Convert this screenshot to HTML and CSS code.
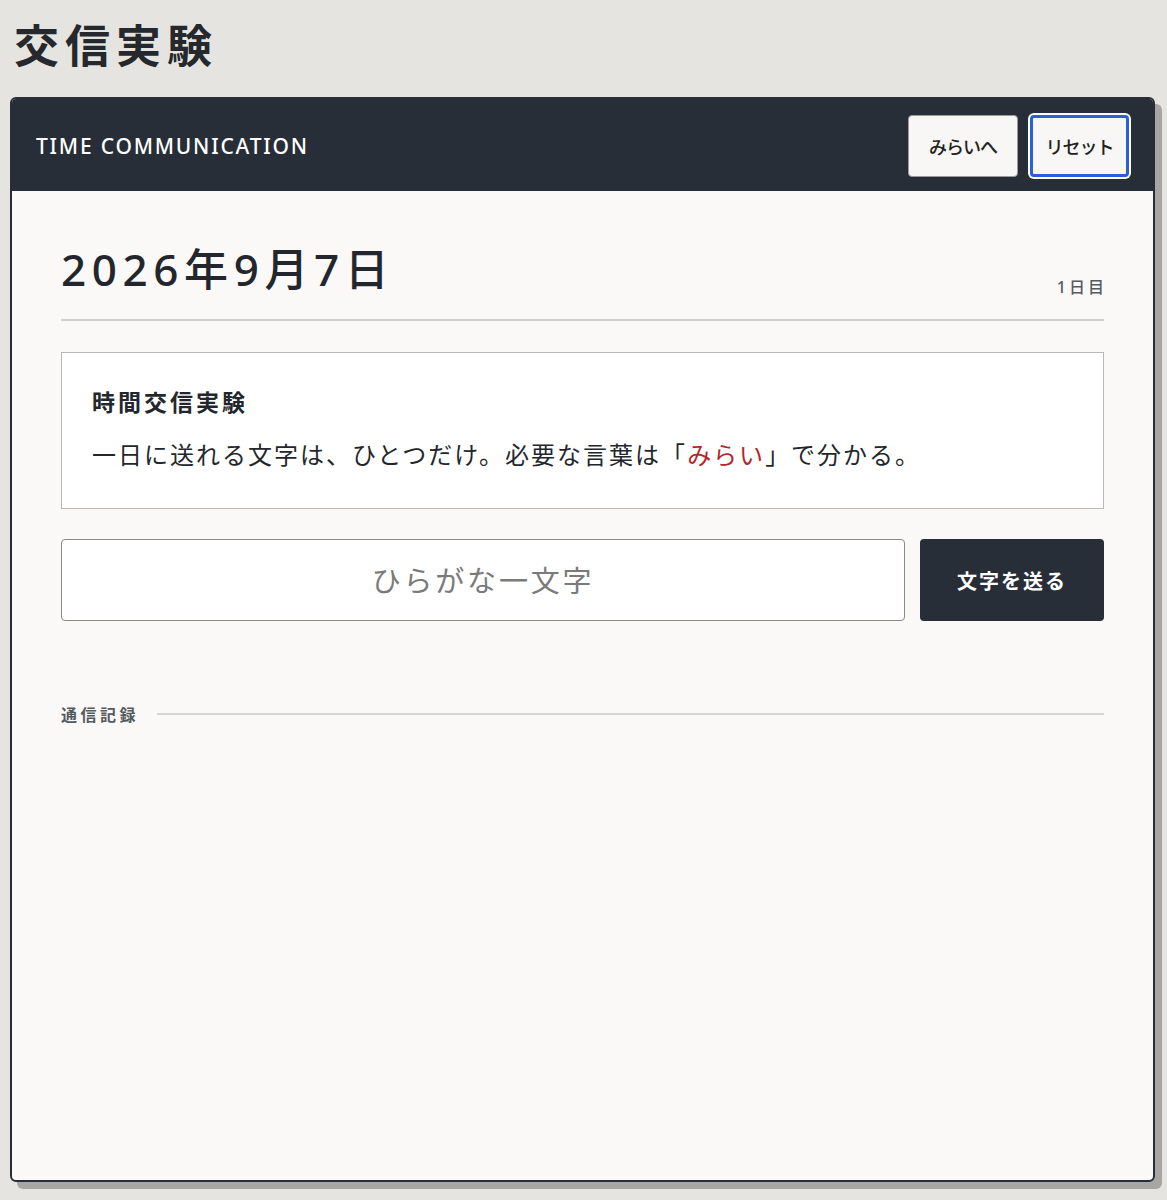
FILE: index.html
```html
<!DOCTYPE html>
<html lang="ja">
<head>
    <meta charset="UTF-8">
    <meta name="viewport" content="width=device-width, initial-scale=1.0">
    <title>交信実験</title>
    <link rel="stylesheet" href="styles.css">
</head>
<body>
    <h1 class="page-title">交信実験</h1>

    <div class="panel">
        <div class="panel-header">
            <span class="panel-title">TIME COMMUNICATION</span>
            <div class="header-actions">
                <button class="header-button future">みらいへ</button>
                <button class="header-button reset focused">リセット</button>
            </div>
        </div>

        <div class="panel-body">
            <div class="date-row">
                <span class="date-text">2026年9月7日</span>
                <span class="day-count">1日目</span>
            </div>

            <div class="info-box">
                <div class="info-title">時間交信実験</div>
                <p class="info-text">一日に送れる文字は、ひとつだけ。必要な言葉は「<span class="keyword">みらい</span>」で分かる。</p>
            </div>

            <div class="send-row">
                <input type="text" class="char-input" placeholder="ひらがな一文字" maxlength="1">
                <button class="send-button">文字を送る</button>
            </div>

            <div class="log-heading">
                <span>通信記録</span>
                <div class="log-line"></div>
            </div>
            <div class="log-list"></div>
        </div>
    </div>
</body>
</html>
```

FILE: styles.css
```css
:root {
    --dark: #272e38;
    --page-bg: #e6e4e0;
    --card-bg: #faf9f8;
    --muted: #555a60;
    --accent-red: #b3262a;
}

* {
    box-sizing: border-box;
    margin: 0;
    padding: 0;
    font-family: 'Noto Sans', 'Noto Sans CJK JP', sans-serif;
}

body {
    background-color: var(--page-bg);
    padding: 20px 12px 10px 10px;
    color: #23272d;
}

.page-title {
    font-size: 45px;
    line-height: 52px;
    font-weight: 700;
    letter-spacing: 6px;
    padding-left: 4px;
    color: #25282c;
    margin-bottom: 25px;
}

.panel {
    min-height: 1085px;
    background-color: var(--card-bg);
    border: 2px solid var(--dark);
    border-radius: 6px;
    box-shadow: 7px 7px 0 #a8a6a2;
    overflow: hidden;
    display: flex;
    flex-direction: column;
}

.panel-header {
    background-color: var(--dark);
    display: flex;
    justify-content: space-between;
    align-items: center;
    padding: 16px 24px 14px 24px;
}

.panel-title {
    color: #fff;
    font-size: 21px;
    letter-spacing: 1.8px;
    font-weight: 500;
}

.header-actions {
    display: flex;
    gap: 12px;
}

.header-button {
    height: 62px;
    background-color: #f8f7f5;
    border: 1px solid #9a9a9a;
    border-radius: 4px;
    font-size: 18px;
    font-weight: 500;
    letter-spacing: -1px;
    color: #222;
    cursor: pointer;
}

.header-button.future {
    width: 110px;
}

.header-button.reset {
    width: 99px;
}

.header-button.focused {
    border: 3px solid #2b5fd9;
    box-shadow: 0 0 0 2px #fff;
}

.panel-body {
    flex: 1;
    padding: 48px 49px;
}

.date-row {
    display: flex;
    justify-content: space-between;
    align-items: flex-end;
    padding-bottom: 20px;
    border-bottom: 2px solid #d0cfcd;
}

.date-text {
    font-size: 44px;
    line-height: 60px;
    font-weight: 500;
    letter-spacing: 5.6px;
}

.day-count {
    font-size: 16px;
    letter-spacing: 3px;
    color: var(--muted);
    font-weight: 500;
    margin-right: -3px;
    margin-bottom: 1px;
}

.info-box {
    margin-top: 31px;
    background-color: #fff;
    border: 1px solid #b9b8b6;
    padding: 34px 30px 33px 30px;
}

.info-title {
    font-size: 23px;
    font-weight: 700;
    line-height: 30px;
    letter-spacing: 3px;
    margin-bottom: 18px;
}

.info-text {
    font-size: 24px;
    line-height: 40px;
    letter-spacing: 2px;
}

.keyword {
    color: var(--accent-red);
}

.send-row {
    display: flex;
    gap: 15px;
    margin-top: 30px;
}

.char-input {
    flex: 1;
    height: 82px;
    background-color: #fff;
    border: 1.5px solid #8a8a8a;
    border-radius: 4px;
    text-align: center;
    font-size: 29px;
    letter-spacing: 2.8px;
    outline: none;
}

.char-input::placeholder {
    color: #7a7a7a;
}

.send-button {
    width: 184px;
    height: 82px;
    background-color: var(--dark);
    color: #fff;
    border: none;
    border-radius: 4px;
    font-size: 20px;
    font-weight: 700;
    letter-spacing: 2px;
    cursor: pointer;
}

.log-heading {
    display: flex;
    align-items: center;
    gap: 18px;
    margin-top: 81px;
    font-size: 16px;
    font-weight: 700;
    letter-spacing: 3.5px;
    color: var(--muted);
}

.log-line {
    flex: 1;
    height: 2px;
    background-color: #d6d5d3;
}
```
